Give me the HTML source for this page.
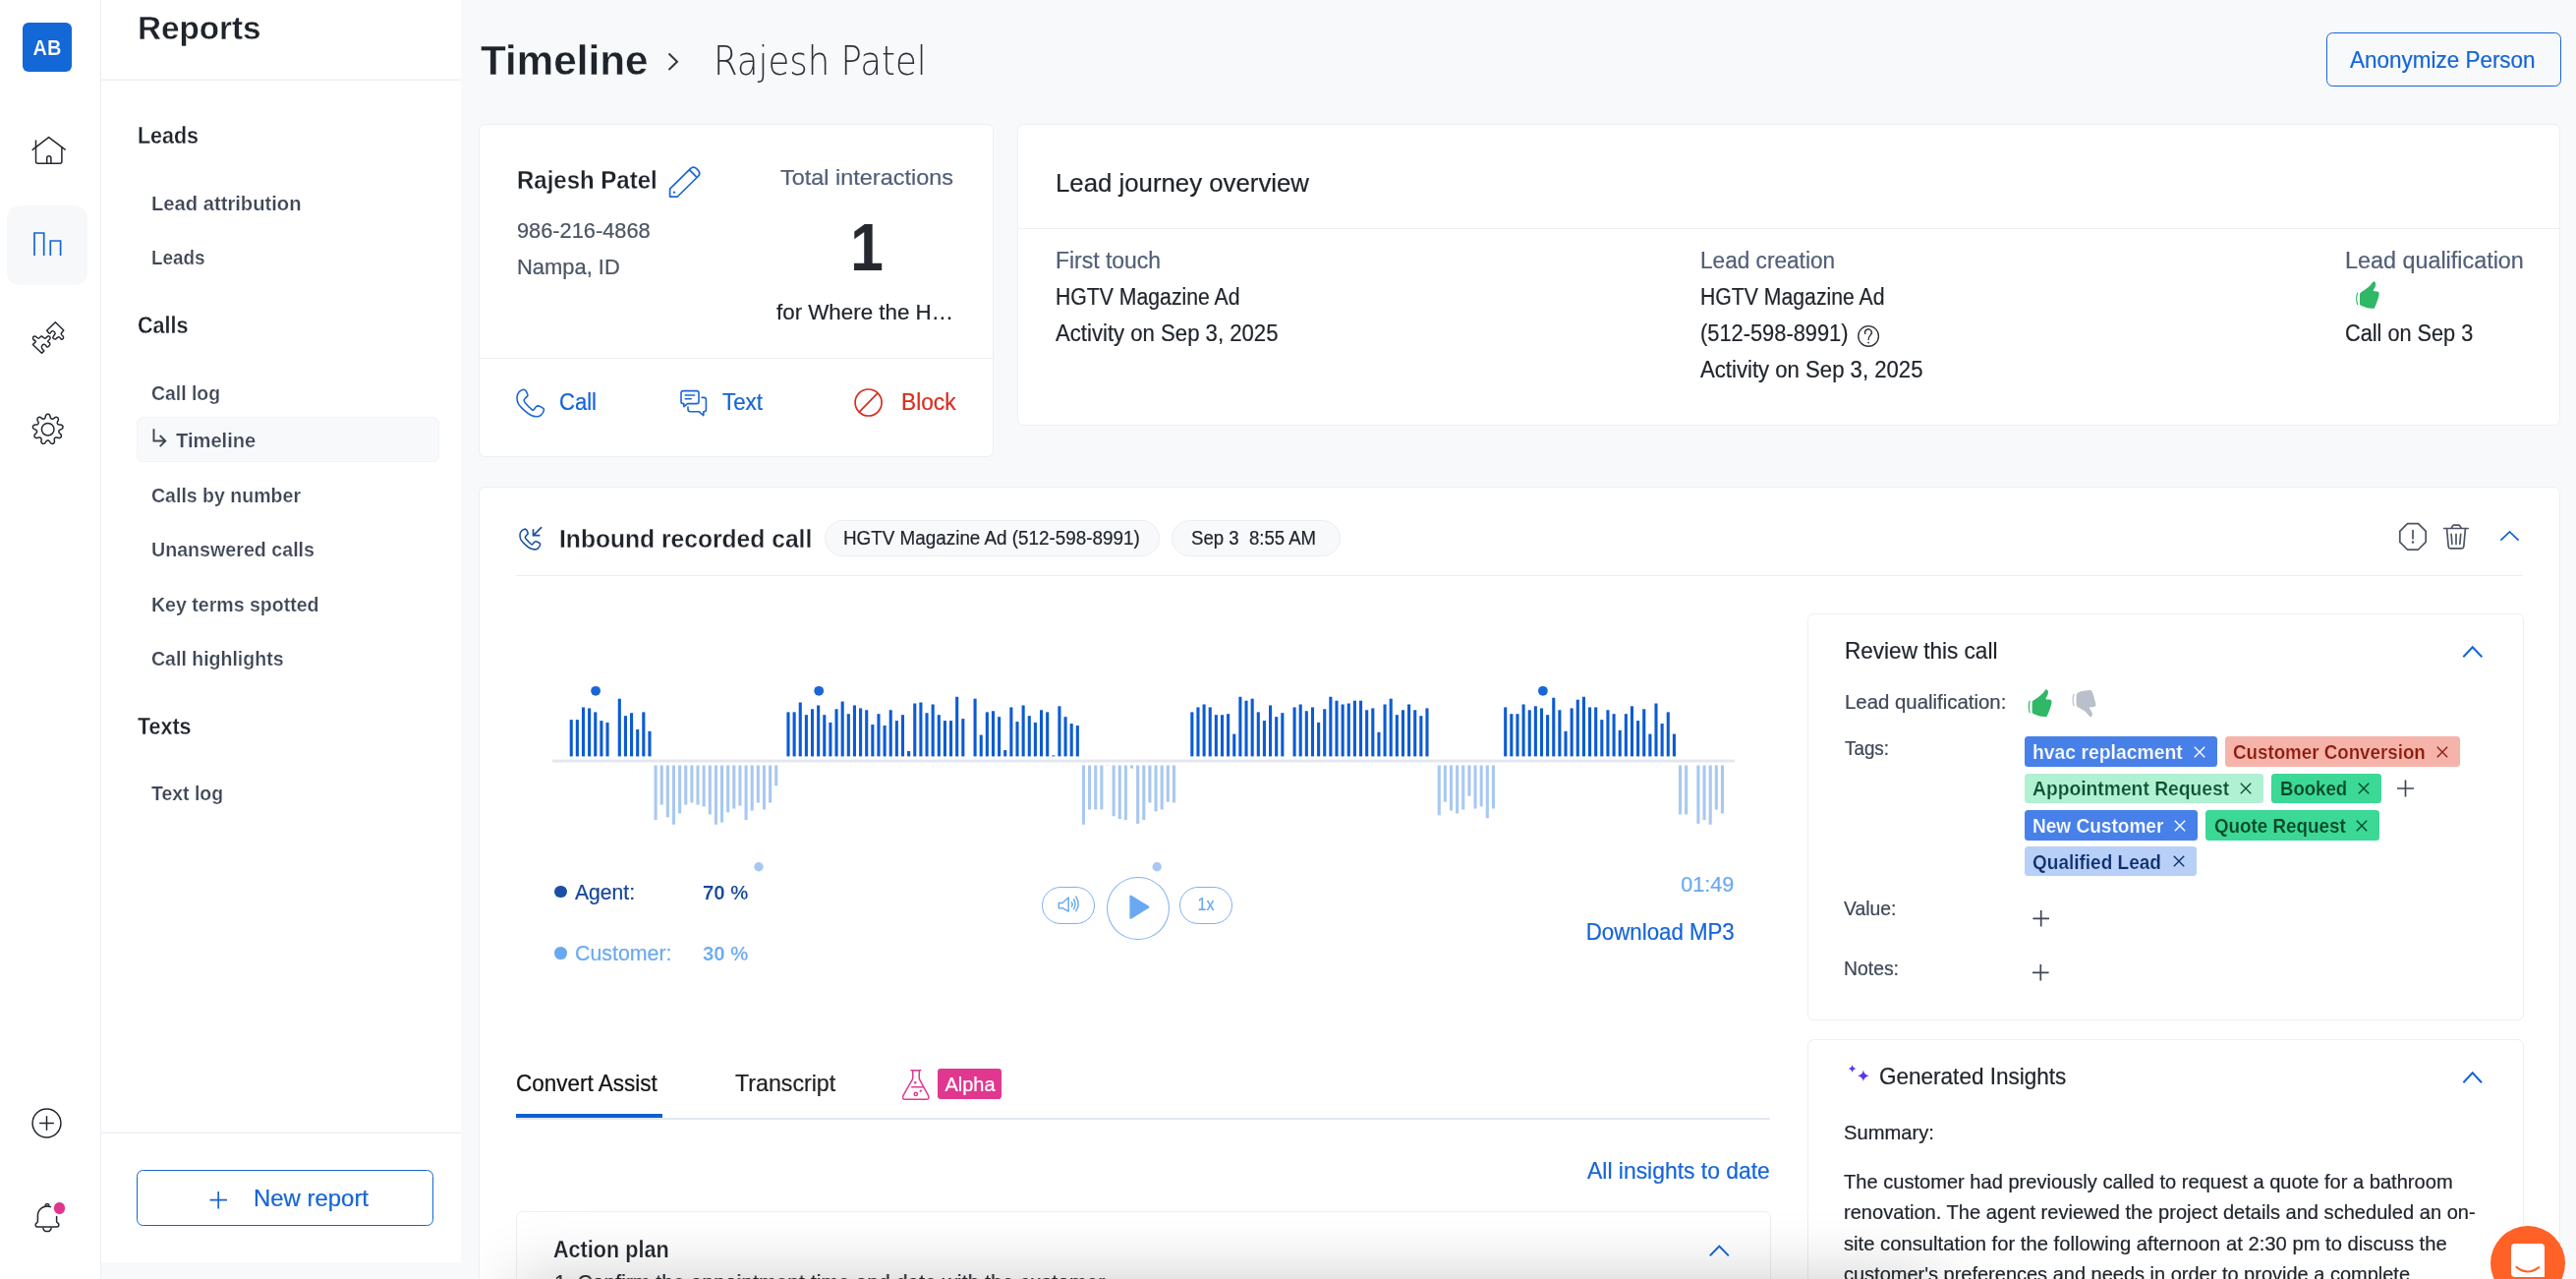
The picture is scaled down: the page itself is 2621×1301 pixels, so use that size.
<!DOCTYPE html>
<html lang="en"><head><meta charset="utf-8"><title>Timeline - Rajesh Patel</title>
<style>
html,body{margin:0;padding:0}
body{width:2621px;height:1301px;overflow:hidden;background:#f7f9fb;font-family:"Liberation Sans",sans-serif;position:relative}
.t{position:absolute;white-space:pre;line-height:1}
.b,.a,.tag{position:absolute;box-sizing:border-box}
.a{overflow:visible}
.card{background:#fff;border:1px solid #eceff3;border-radius:6.4px}
.tag{border-radius:3.5px}
.sb{-webkit-text-stroke:0.45px currentColor}
</style></head><body>
<!-- rail -->
<div class="b" style="left:0;top:0;width:103px;height:1301px;background:#fff;border-right:1px solid #eceef3"></div>
<div class="b" style="left:22.8px;top:22.5px;width:50.4px;height:50.4px;border-radius:6px;background:#1467d7"></div>
<div class="b" style="left:7.4px;top:208.5px;width:81.4px;height:81.8px;border-radius:13px;background:#f6f8fa"></div>
<svg class="a" style="left:0;top:0" width="102" height="1301" viewBox="0 0 102 1301" fill="none" stroke="#23272e" stroke-width="1.5" stroke-linecap="round" stroke-linejoin="round">
<path d="M33.1 152.4L49.6 139.6L66.2 152.1"/><path d="M36.5 143V164.2Q36.5 166.2 38.5 166.2H60.9Q62.9 166.2 62.9 164.2V150"/><path d="M47.7 166.2V160.8A2.1 2.1 0 0 1 51.9 160.8V166.2"/>
<path d="M35 260V237H44.7V260M51.3 260V245H61.6V260" stroke="#1565d8" stroke-width="1.7" stroke-linecap="butt" stroke-linejoin="miter"/>
<g transform="translate(20 315) scale(0.0469)" stroke-width="31"><path d="M285.0 755.0L480.0 945.0L530.0 895.0C513.3 873.3 486.7 850.0 480.0 830.0C473.3 810.0 479.2 787.5 490.0 775.0C500.8 762.5 526.7 749.2 545.0 755.0C563.3 760.8 582.5 807.5 600.0 810.0C617.5 812.5 640.8 783.3 650.0 770.0C659.2 756.7 661.7 743.3 655.0 730.0C648.3 716.7 610.0 705.0 610.0 690.0C610.0 675.0 646.7 655.0 655.0 640.0C663.3 625.0 665.8 611.7 660.0 600.0C654.2 588.3 639.2 565.8 620.0 570.0C600.8 574.2 569.2 624.2 545.0 625.0C520.8 625.8 497.5 575.0 475.0 575.0C452.5 575.0 433.3 625.0 410.0 625.0C386.7 625.0 355.0 579.2 335.0 575.0C315.0 570.8 295.8 587.5 290.0 600.0C284.2 612.5 290.0 635.0 300.0 650.0C310.0 665.0 352.5 672.5 350.0 690.0C347.5 707.5 306.7 733.3 285.0 755.0Z"/><path d="M775.0 270.0L955.0 450.0C936.7 475.0 900.8 501.7 900.0 525.0C899.2 548.3 943.3 572.5 950.0 590.0C956.7 607.5 947.5 620.8 940.0 630.0C932.5 639.2 920.0 651.7 905.0 645.0C890.0 638.3 872.5 590.8 850.0 590.0C827.5 589.2 791.7 638.3 770.0 640.0C748.3 641.7 720.0 620.0 720.0 600.0C720.0 580.0 766.7 541.7 770.0 520.0C773.3 498.3 751.7 479.2 740.0 470.0C728.3 460.8 715.0 457.5 700.0 465.0C685.0 472.5 668.3 516.7 650.0 515.0C631.7 513.3 610.0 475.0 590.0 455.0L775.0 270.0Z"/></g>
<path d="M48.70 421.20L49.24 421.27L49.76 421.49L50.26 421.86L50.71 422.40L51.03 423.50L51.27 424.61L51.57 425.18L51.88 425.60L52.21 425.89L52.56 426.08L52.96 426.17L53.40 426.15L53.90 426.03L54.50 425.79L55.40 425.10L56.35 424.46L57.05 424.33L57.66 424.36L58.20 424.53L58.66 424.83L59.03 425.23L59.29 425.73L59.44 426.33L59.43 427.04L58.96 428.09L58.44 429.09L58.31 429.72L58.28 430.24L58.34 430.68L58.49 431.05L58.73 431.37L59.08 431.64L59.55 431.87L60.16 432.07L61.29 432.12L62.43 432.24L63.05 432.59L63.50 433.01L63.80 433.49L63.96 434.01L63.99 434.55L63.87 435.11L63.59 435.66L63.13 436.20L62.10 436.70L61.05 437.13L60.54 437.53L60.19 437.91L59.95 438.28L59.83 438.66L59.81 439.06L59.91 439.49L60.11 439.97L60.46 440.52L61.29 441.28L62.09 442.11L62.34 442.77L62.41 443.38L62.33 443.95L62.12 444.45L61.79 444.88L61.34 445.23L60.78 445.47L60.08 445.59L58.96 445.31L57.89 444.97L57.24 444.95L56.72 445.01L56.30 445.14L55.96 445.36L55.70 445.65L55.49 446.04L55.34 446.54L55.25 447.18L55.40 448.30L55.48 449.45L55.24 450.12L54.90 450.63L54.48 451.01L54.00 451.27L53.47 451.38L52.90 451.36L52.31 451.18L51.70 450.82L51.03 449.90L50.42 448.94L49.94 448.51L49.51 448.22L49.10 448.06L48.70 448.00L48.30 448.06L47.89 448.22L47.46 448.51L46.98 448.94L46.37 449.90L45.70 450.82L45.09 451.18L44.50 451.36L43.93 451.38L43.40 451.27L42.92 451.01L42.50 450.63L42.16 450.12L41.92 449.45L42.00 448.30L42.15 447.18L42.06 446.54L41.91 446.04L41.70 445.65L41.44 445.36L41.10 445.14L40.68 445.01L40.16 444.95L39.51 444.97L38.44 445.31L37.32 445.59L36.62 445.47L36.06 445.23L35.61 444.88L35.28 444.45L35.07 443.95L34.99 443.38L35.06 442.77L35.31 442.11L36.11 441.28L36.94 440.52L37.29 439.97L37.49 439.49L37.59 439.06L37.57 438.66L37.45 438.28L37.21 437.91L36.86 437.53L36.35 437.13L35.30 436.70L34.27 436.20L33.81 435.66L33.53 435.11L33.41 434.55L33.44 434.01L33.60 433.49L33.90 433.01L34.35 432.59L34.97 432.24L36.11 432.12L37.24 432.07L37.85 431.87L38.32 431.64L38.67 431.37L38.91 431.05L39.06 430.68L39.12 430.24L39.09 429.72L38.96 429.09L38.44 428.09L37.97 427.04L37.96 426.33L38.11 425.73L38.37 425.23L38.74 424.83L39.20 424.53L39.74 424.36L40.35 424.33L41.05 424.46L42.00 425.10L42.90 425.79L43.50 426.03L44.00 426.15L44.44 426.17L44.84 426.08L45.19 425.89L45.52 425.60L45.83 425.18L46.13 424.61L46.37 423.50L46.69 422.40L47.14 421.86L47.64 421.49L48.16 421.27Z"/><circle cx="48.7" cy="436.7" r="6.3"/>
<circle cx="47.5" cy="1142.5" r="14.4"/><path d="M40.7 1142.5H54.3M47.5 1135.7V1149.3"/>
<path d="M51.5 1227.6A9.6 9.6 0 0 0 38.4 1236.5V1242.2Q38.4 1243.6 37 1244.2Q36.2 1244.8 36.2 1245.9Q36.2 1247.9 38.2 1247.9H57.8Q59.8 1247.9 59.8 1245.9Q59.8 1244.8 59 1244.2Q57.6 1243.6 57.6 1242.2V1237.5"/><path d="M46.2 1225.8A1.9 1.9 0 0 1 49.8 1225.8"/><path d="M43.9 1249.3A4.2 4.2 0 0 0 52.1 1249.3"/>
</svg>
<div class="b" style="left:53.6px;top:1222.1px;width:13.6px;height:13.6px;border-radius:50%;background:#e0358c;border:1.6px solid #fff"></div>

<!-- sidebar -->
<div class="b" style="left:103px;top:0;width:366px;height:1284px;background:#fff"></div>
<div class="b" style="left:103px;top:80px;width:366px;height:2px;background:linear-gradient(#f7f8fa 50%,#eceef3 50%)"></div>
<div class="b" style="left:103px;top:1151px;width:366px;height:2px;background:linear-gradient(#f7f8fa 50%,#eceef3 50%)"></div>
<div class="b" style="left:139.1px;top:424.3px;width:308.1px;height:45.4px;border-radius:6.4px;background:#f8f9fb;border:1.6px solid #f1f3f6"></div>
<svg class="a" style="left:150px;top:430px" width="24" height="30" viewBox="150 430 24 30" fill="none" stroke="#3f4756" stroke-width="1.9"><path d="M156.5 436.2V448.5H167.6M162.7 443L168.3 448.5L162.7 454.1"/></svg>
<div class="b" style="left:139.2px;top:1190.4px;width:302.2px;height:56.6px;border-radius:6.4px;border:1.6px solid #1565d8;background:#fff"></div>
<svg class="a" style="left:212px;top:1210px" width="22" height="22" viewBox="212 1210 22 22" fill="none" stroke="#1565d8" stroke-width="1.7"><path d="M213.5 1220.7H231M222.2 1212V1229.4"/></svg>

<!-- header -->
<svg class="a" style="left:676px;top:50px" width="18" height="26" viewBox="676 50 18 26" fill="none" stroke="#33383f" stroke-width="2"><path d="M680.5 54.5L689 62.7L680.5 71"/></svg>
<div class="b" style="left:2366.5px;top:33.2px;width:239.3px;height:54.4px;border-radius:6.4px;border:1.6px solid #1565d8;background:#f7f9fb"></div>

<!-- contact card -->
<div class="b card" style="left:487px;top:126px;width:524px;height:339px"></div>
<div class="b" style="left:488px;top:364px;width:522px;height:1px;background:#eceff3"></div>
<svg class="a" style="left:678px;top:166px" width="38" height="38" viewBox="678 166 38 38" fill="none" stroke="#1a66d8" stroke-width="1.75" stroke-linejoin="round"><path d="M681.6 200V192.2L702.4 171.7Q705.6 168.6 708.8 171.7L710.2 173.1Q713.3 176.3 710.2 179.5L689.3 200Z"/><path d="M701.6 172.8L709 180.4"/><circle cx="686" cy="195.6" r="1.2" fill="#1a66d8" stroke="none"/></svg>
<g></g>
<svg class="a" style="left:526.4px;top:395.8px" width="27.8" height="28" viewBox="315 420 485 490" fill="none" stroke="#1a66d8" stroke-width="28" stroke-linejoin="round"><path d="M425.0 425.0C406.7 430.8 368.3 447.5 350.0 470.0C331.7 492.5 316.7 525.0 315.0 560.0C313.3 595.0 317.5 640.0 340.0 680.0C362.5 720.0 413.3 766.7 450.0 800.0C486.7 833.3 525.0 862.5 560.0 880.0C595.0 897.5 630.0 905.0 660.0 905.0C690.0 905.0 717.5 899.2 740.0 880.0C762.5 860.8 790.0 811.7 795.0 790.0C800.0 768.3 787.5 762.5 770.0 750.0C752.5 737.5 710.0 717.5 690.0 715.0C670.0 712.5 663.3 723.3 650.0 735.0C636.7 746.7 621.7 777.5 610.0 785.0C598.3 792.5 605.0 800.8 580.0 780.0C555.0 759.2 483.3 688.3 460.0 660.0C436.7 631.7 438.3 625.0 440.0 610.0C441.7 595.0 459.2 583.3 470.0 570.0C480.8 556.7 501.7 545.0 505.0 530.0C508.3 515.0 497.5 495.8 490.0 480.0C482.5 464.2 470.8 444.2 460.0 435.0C449.2 425.8 443.3 419.2 425.0 425.0Z"/></svg>
<svg class="a" style="left:690px;top:394px" width="32" height="32" viewBox="690 394 32 32" fill="none" stroke="#1a66d8" stroke-width="1.6" stroke-linejoin="round" stroke-linecap="round"><path d="M695.2 397.6H708.8Q711 397.6 711 399.8V408.4Q711 410.6 708.8 410.6H699.5L695.8 413.6V410.6H695.2Q693 410.6 693 408.4V399.8Q693 397.6 695.2 397.6Z"/><path d="M697.2 402H706.6M697.2 405.8H703.2"/><path d="M714.2 404.4H716.2Q718.4 404.4 718.4 406.6V416.6Q718.4 418.8 716.2 418.8H715.8V422.6L711.4 418.8H702.2Q700 418.8 700 416.6V414"/></svg>
<svg class="a" style="left:868px;top:394px" width="32" height="32" viewBox="868 394 32 32" fill="none" stroke="#d92d20" stroke-width="1.7"><circle cx="883.6" cy="409.5" r="13.5"/><path d="M874.2 419.2L893 399.8"/></svg>

<!-- journey card -->
<div class="b card" style="left:1035px;top:126px;width:1570px;height:307px"></div>
<div class="b" style="left:1036px;top:232px;width:1568px;height:1px;background:#eceff3"></div>
<svg class="a" style="left:1888px;top:329px" width="26" height="26" viewBox="1888 329 26 26" fill="none" stroke="#2b2f36" stroke-width="1.35" stroke-linecap="round"><circle cx="1901.1" cy="341.9" r="10.3"/><path d="M1897.8 339.6A3.4 3.4 0 1 1 1903.4 340.6Q1901.1 342.6 1901.1 345.6"/><circle cx="1901.1" cy="348.6" r="0.9" fill="#2b2f36" stroke="none"/></svg>
<svg class="a" style="left:2395.8px;top:286.4px" width="25.6" height="28" viewBox="325 290 640 725"><path d="M460.0 600.0C485.8 575.0 560.0 530.0 600.0 500.0C640.0 470.0 669.2 450.8 700.0 420.0C730.8 389.2 765.8 335.8 785.0 315.0C804.2 294.2 802.8 290.8 815.0 295.0C827.2 299.2 852.2 315.8 858.0 340.0C863.8 364.2 859.7 405.8 850.0 440.0C840.3 474.2 791.7 525.0 800.0 545.0C808.3 565.0 875.0 550.8 900.0 560.0C925.0 569.2 943.3 576.7 950.0 600.0C956.7 623.3 951.7 653.3 940.0 700.0C928.3 746.7 899.2 830.0 880.0 880.0C860.8 930.0 840.0 978.3 825.0 1000.0C810.0 1021.7 827.5 1013.3 790.0 1010.0C752.5 1006.7 655.0 995.0 600.0 980.0C545.0 965.0 485.8 941.7 460.0 920.0C434.2 898.3 447.5 895.0 445.0 850.0C442.5 805.0 442.5 691.7 445.0 650.0C447.5 608.3 434.2 625.0 460.0 600.0Z" fill="#2fb866"/><path d="M385 590Q330 750 385 910" fill="none" stroke="#2fb866" stroke-width="30"/></svg>

<!-- call card -->
<div class="b card" style="left:487px;top:495px;width:2118px;height:900px"></div>
<div class="b" style="left:525px;top:585px;width:2042px;height:1px;background:#eceff3"></div>
<svg class="a" style="left:528.5px;top:538px" width="20.9" height="21.1" viewBox="315 420 485 490" fill="none" stroke="#1a4fa3" stroke-width="36" stroke-linejoin="round"><path d="M425.0 425.0C406.7 430.8 368.3 447.5 350.0 470.0C331.7 492.5 316.7 525.0 315.0 560.0C313.3 595.0 317.5 640.0 340.0 680.0C362.5 720.0 413.3 766.7 450.0 800.0C486.7 833.3 525.0 862.5 560.0 880.0C595.0 897.5 630.0 905.0 660.0 905.0C690.0 905.0 717.5 899.2 740.0 880.0C762.5 860.8 790.0 811.7 795.0 790.0C800.0 768.3 787.5 762.5 770.0 750.0C752.5 737.5 710.0 717.5 690.0 715.0C670.0 712.5 663.3 723.3 650.0 735.0C636.7 746.7 621.7 777.5 610.0 785.0C598.3 792.5 605.0 800.8 580.0 780.0C555.0 759.2 483.3 688.3 460.0 660.0C436.7 631.7 438.3 625.0 440.0 610.0C441.7 595.0 459.2 583.3 470.0 570.0C480.8 556.7 501.7 545.0 505.0 530.0C508.3 515.0 497.5 495.8 490.0 480.0C482.5 464.2 470.8 444.2 460.0 435.0C449.2 425.8 443.3 419.2 425.0 425.0Z"/></svg>
<svg class="a" style="left:540px;top:534px" width="14" height="14" viewBox="540 534 14 14" fill="none" stroke="#1a4fa3" stroke-width="1.7" stroke-linecap="round"><path d="M550.7 536.6L542.6 544.6M542.5 538.8V544.7H548.7"/></svg>
<div class="b" style="left:838.9px;top:528.9px;width:340.9px;height:37.1px;border-radius:19px;background:#f8f9fb;border:1.5px solid #eceef2"></div>
<div class="b" style="left:1192.3px;top:528.9px;width:172px;height:37.1px;border-radius:19px;background:#f8f9fb;border:1.5px solid #eceef2"></div>
<svg class="a" style="left:2436px;top:528px" width="132" height="36" viewBox="2436 528 132 36" fill="none" stroke="#4d5463" stroke-width="1.75" stroke-linecap="round" stroke-linejoin="round"><path d="M2449.5 532.6H2460.5L2468.2 540.3V551.3L2460.5 559H2449.5L2441.8 551.3V540.3Z"/><path d="M2455 539.6V547.8"/><circle cx="2455" cy="551.5" r="1.2" fill="#4a5160" stroke="none"/>
<path d="M2486.6 537.5H2511.2M2494.1 537.2L2495.8 534.6Q2496.2 534.1 2496.8 534.1H2501.6Q2502.2 534.1 2502.6 534.6L2504.3 537.2M2489.6 538L2491.2 556Q2491.4 557.8 2493.2 557.8H2504.8Q2506.6 557.8 2506.8 556L2508.4 538M2494.1 543.3L2494.9 553.4M2499 543.3V553.4M2503.7 543.3L2502.8 553.4" stroke-width="1.7"/>
<path d="M2544.4 549.6L2553.5 540.9L2562.6 549.6" stroke="#1565d8" stroke-width="1.8" stroke-linecap="butt" stroke-linejoin="miter"/></svg>

<!-- waveform -->
<svg class="a" style="left:550px;top:680px" width="1230" height="220" viewBox="0 0 1230 220">
<rect x="12" y="92.6" width="1203" height="2.9" fill="#e3e6f0"/>
<g fill="#0d5bd3"><rect x="29.69" y="52.11" width="3.1" height="37.29"/><rect x="35.82" y="52.11" width="3.1" height="37.29"/><rect x="41.95" y="39.45" width="3.1" height="49.95"/><rect x="48.09" y="40.43" width="3.1" height="48.97"/><rect x="54.22" y="44.37" width="3.1" height="45.03"/><rect x="60.35" y="53.10" width="3.1" height="36.30"/><rect x="66.48" y="54.93" width="3.1" height="34.47"/><rect x="78.75" y="30.73" width="3.1" height="58.67"/><rect x="84.88" y="48.17" width="3.1" height="41.23"/><rect x="91.01" y="45.22" width="3.1" height="44.18"/><rect x="97.14" y="61.96" width="3.1" height="27.44"/><rect x="103.27" y="44.37" width="3.1" height="45.03"/><rect x="109.41" y="63.79" width="3.1" height="25.61"/><rect x="250.44" y="44.37" width="3.1" height="45.03"/><rect x="256.57" y="44.37" width="3.1" height="45.03"/><rect x="262.71" y="34.52" width="3.1" height="54.88"/><rect x="268.84" y="47.19" width="3.1" height="42.21"/><rect x="274.97" y="41.28" width="3.1" height="48.12"/><rect x="281.10" y="37.48" width="3.1" height="51.92"/><rect x="287.23" y="47.19" width="3.1" height="42.21"/><rect x="293.37" y="54.93" width="3.1" height="34.47"/><rect x="299.50" y="41.28" width="3.1" height="48.12"/><rect x="305.63" y="33.54" width="3.1" height="55.86"/><rect x="311.76" y="46.20" width="3.1" height="43.20"/><rect x="317.89" y="37.48" width="3.1" height="51.92"/><rect x="324.03" y="40.43" width="3.1" height="48.97"/><rect x="330.16" y="42.26" width="3.1" height="47.14"/><rect x="336.29" y="57.04" width="3.1" height="32.36"/><rect x="342.42" y="46.20" width="3.1" height="43.20"/><rect x="348.55" y="58.02" width="3.1" height="31.38"/><rect x="354.69" y="42.26" width="3.1" height="47.14"/><rect x="360.82" y="53.10" width="3.1" height="36.30"/><rect x="366.95" y="47.19" width="3.1" height="42.21"/><rect x="373.08" y="84.05" width="3.1" height="5.35"/><rect x="379.21" y="35.51" width="3.1" height="53.89"/><rect x="385.35" y="34.52" width="3.1" height="54.88"/><rect x="391.48" y="45.22" width="3.1" height="44.18"/><rect x="397.61" y="36.49" width="3.1" height="52.91"/><rect x="403.74" y="47.19" width="3.1" height="42.21"/><rect x="409.87" y="53.10" width="3.1" height="36.30"/><rect x="416.01" y="53.10" width="3.1" height="36.30"/><rect x="422.14" y="28.76" width="3.1" height="60.64"/><rect x="428.27" y="51.13" width="3.1" height="38.27"/><rect x="440.53" y="30.73" width="3.1" height="58.67"/><rect x="446.67" y="67.59" width="3.1" height="21.81"/><rect x="452.80" y="44.37" width="3.1" height="45.03"/><rect x="458.93" y="43.25" width="3.1" height="46.15"/><rect x="465.06" y="49.16" width="3.1" height="40.24"/><rect x="471.19" y="83.07" width="3.1" height="6.33"/><rect x="477.33" y="39.45" width="3.1" height="49.95"/><rect x="483.46" y="54.08" width="3.1" height="35.32"/><rect x="489.59" y="37.48" width="3.1" height="51.92"/><rect x="495.72" y="48.17" width="3.1" height="41.23"/><rect x="501.85" y="54.93" width="3.1" height="34.47"/><rect x="507.99" y="42.26" width="3.1" height="47.14"/><rect x="514.12" y="44.37" width="3.1" height="45.03"/><rect x="520.25" y="88.42" width="3.1" height="0.98"/><rect x="526.38" y="38.32" width="3.1" height="51.08"/><rect x="532.51" y="49.16" width="3.1" height="40.24"/><rect x="538.65" y="56.05" width="3.1" height="33.35"/><rect x="544.78" y="58.02" width="3.1" height="31.38"/><rect x="661.29" y="44.37" width="3.1" height="45.03"/><rect x="667.42" y="39.45" width="3.1" height="49.95"/><rect x="673.55" y="36.49" width="3.1" height="52.91"/><rect x="679.68" y="39.45" width="3.1" height="49.95"/><rect x="685.81" y="47.19" width="3.1" height="42.21"/><rect x="691.95" y="47.19" width="3.1" height="42.21"/><rect x="698.08" y="46.20" width="3.1" height="43.20"/><rect x="704.21" y="66.61" width="3.1" height="22.79"/><rect x="710.34" y="28.76" width="3.1" height="60.64"/><rect x="716.47" y="32.70" width="3.1" height="56.70"/><rect x="722.61" y="30.73" width="3.1" height="58.67"/><rect x="728.74" y="44.37" width="3.1" height="45.03"/><rect x="734.87" y="53.10" width="3.1" height="36.30"/><rect x="741.00" y="37.48" width="3.1" height="51.92"/><rect x="747.13" y="49.16" width="3.1" height="40.24"/><rect x="753.27" y="45.22" width="3.1" height="44.18"/><rect x="765.53" y="39.45" width="3.1" height="49.95"/><rect x="771.66" y="36.49" width="3.1" height="52.91"/><rect x="777.79" y="43.25" width="3.1" height="46.15"/><rect x="783.93" y="39.45" width="3.1" height="49.95"/><rect x="790.06" y="54.93" width="3.1" height="34.47"/><rect x="796.19" y="41.28" width="3.1" height="48.12"/><rect x="802.32" y="28.76" width="3.1" height="60.64"/><rect x="808.45" y="32.70" width="3.1" height="56.70"/><rect x="814.59" y="36.49" width="3.1" height="52.91"/><rect x="820.72" y="35.51" width="3.1" height="53.89"/><rect x="826.85" y="32.70" width="3.1" height="56.70"/><rect x="832.98" y="32.70" width="3.1" height="56.70"/><rect x="839.11" y="42.26" width="3.1" height="47.14"/><rect x="845.25" y="40.43" width="3.1" height="48.97"/><rect x="851.38" y="64.78" width="3.1" height="24.62"/><rect x="857.51" y="36.49" width="3.1" height="52.91"/><rect x="863.64" y="30.73" width="3.1" height="58.67"/><rect x="869.77" y="47.19" width="3.1" height="42.21"/><rect x="875.91" y="42.26" width="3.1" height="47.14"/><rect x="882.04" y="36.49" width="3.1" height="52.91"/><rect x="888.17" y="42.26" width="3.1" height="47.14"/><rect x="894.30" y="48.17" width="3.1" height="41.23"/><rect x="900.43" y="40.43" width="3.1" height="48.97"/><rect x="980.15" y="39.45" width="3.1" height="49.95"/><rect x="986.28" y="46.20" width="3.1" height="43.20"/><rect x="992.41" y="46.20" width="3.1" height="43.20"/><rect x="998.55" y="36.49" width="3.1" height="52.91"/><rect x="1004.68" y="42.26" width="3.1" height="47.14"/><rect x="1010.81" y="38.32" width="3.1" height="51.08"/><rect x="1016.94" y="40.43" width="3.1" height="48.97"/><rect x="1023.07" y="47.19" width="3.1" height="42.21"/><rect x="1029.21" y="29.74" width="3.1" height="59.66"/><rect x="1035.34" y="42.26" width="3.1" height="47.14"/><rect x="1041.47" y="63.79" width="3.1" height="25.61"/><rect x="1047.60" y="40.43" width="3.1" height="48.97"/><rect x="1053.73" y="31.71" width="3.1" height="57.69"/><rect x="1059.87" y="28.76" width="3.1" height="60.64"/><rect x="1066.00" y="39.45" width="3.1" height="49.95"/><rect x="1072.13" y="39.45" width="3.1" height="49.95"/><rect x="1078.26" y="52.11" width="3.1" height="37.29"/><rect x="1084.39" y="42.26" width="3.1" height="47.14"/><rect x="1090.53" y="46.20" width="3.1" height="43.20"/><rect x="1096.66" y="62.81" width="3.1" height="26.59"/><rect x="1102.79" y="46.20" width="3.1" height="43.20"/><rect x="1108.92" y="38.32" width="3.1" height="51.08"/><rect x="1115.05" y="53.10" width="3.1" height="36.30"/><rect x="1121.19" y="41.28" width="3.1" height="48.12"/><rect x="1127.32" y="66.61" width="3.1" height="22.79"/><rect x="1133.45" y="35.51" width="3.1" height="53.89"/><rect x="1139.58" y="56.05" width="3.1" height="33.35"/><rect x="1145.71" y="44.37" width="3.1" height="45.03"/><rect x="1151.85" y="66.61" width="3.1" height="22.79"/></g>
<g fill="#a9c8f1"><rect x="115.54" y="98.50" width="3.1" height="55.58"/><rect x="121.67" y="98.50" width="3.1" height="40.10"/><rect x="127.80" y="98.50" width="3.1" height="52.76"/><rect x="133.93" y="98.50" width="3.1" height="60.22"/><rect x="140.07" y="98.50" width="3.1" height="48.97"/><rect x="146.20" y="98.50" width="3.1" height="40.10"/><rect x="152.33" y="98.50" width="3.1" height="37.99"/><rect x="158.46" y="98.50" width="3.1" height="40.10"/><rect x="164.59" y="98.50" width="3.1" height="41.93"/><rect x="170.73" y="98.50" width="3.1" height="49.95"/><rect x="176.86" y="98.50" width="3.1" height="60.22"/><rect x="182.99" y="98.50" width="3.1" height="58.11"/><rect x="189.12" y="98.50" width="3.1" height="47.84"/><rect x="195.25" y="98.50" width="3.1" height="44.04"/><rect x="201.39" y="98.50" width="3.1" height="41.09"/><rect x="207.52" y="98.50" width="3.1" height="55.58"/><rect x="213.65" y="98.50" width="3.1" height="46.01"/><rect x="219.78" y="98.50" width="3.1" height="37.99"/><rect x="225.91" y="98.50" width="3.1" height="45.03"/><rect x="232.05" y="98.50" width="3.1" height="37.99"/><rect x="238.18" y="98.50" width="3.1" height="20.82"/><rect x="550.91" y="98.50" width="3.1" height="60.22"/><rect x="557.04" y="98.50" width="3.1" height="45.03"/><rect x="563.17" y="98.50" width="3.1" height="45.03"/><rect x="569.31" y="98.50" width="3.1" height="45.03"/><rect x="575.44" y="98.50" width="3.1" height="0.42"/><rect x="581.57" y="98.50" width="3.1" height="51.78"/><rect x="587.70" y="98.50" width="3.1" height="54.59"/><rect x="593.83" y="98.50" width="3.1" height="55.58"/><rect x="599.97" y="98.50" width="3.1" height="3.10"/><rect x="606.10" y="98.50" width="3.1" height="59.38"/><rect x="612.23" y="98.50" width="3.1" height="55.58"/><rect x="618.36" y="98.50" width="3.1" height="37.99"/><rect x="624.49" y="98.50" width="3.1" height="46.86"/><rect x="630.63" y="98.50" width="3.1" height="45.03"/><rect x="636.76" y="98.50" width="3.1" height="37.15"/><rect x="642.89" y="98.50" width="3.1" height="37.99"/><rect x="912.70" y="98.50" width="3.1" height="50.79"/><rect x="918.83" y="98.50" width="3.1" height="37.15"/><rect x="924.96" y="98.50" width="3.1" height="46.01"/><rect x="931.09" y="98.50" width="3.1" height="48.97"/><rect x="937.23" y="98.50" width="3.1" height="45.03"/><rect x="943.36" y="98.50" width="3.1" height="31.24"/><rect x="949.49" y="98.50" width="3.1" height="44.04"/><rect x="955.62" y="98.50" width="3.1" height="41.93"/><rect x="961.75" y="98.50" width="3.1" height="53.75"/><rect x="967.89" y="98.50" width="3.1" height="44.04"/><rect x="1157.98" y="98.50" width="3.1" height="49.95"/><rect x="1164.11" y="98.50" width="3.1" height="49.95"/><rect x="1176.37" y="98.50" width="3.1" height="59.38"/><rect x="1182.51" y="98.50" width="3.1" height="55.58"/><rect x="1188.64" y="98.50" width="3.1" height="60.22"/><rect x="1194.77" y="98.50" width="3.1" height="45.03"/><rect x="1200.90" y="98.50" width="3.1" height="48.97"/></g>
<g fill="#1a66d8"><circle cx="56.1" cy="22.8" r="4.9"/><circle cx="283.2" cy="22.8" r="4.9"/><circle cx="1019.9" cy="22.8" r="4.9"/></g>
<g fill="#a9c8f1"><circle cx="222" cy="201.7" r="4.7"/><circle cx="627.2" cy="201.7" r="4.7"/></g>
</svg>
<div class="b" style="left:564.4px;top:900.6px;width:12.6px;height:12.6px;border-radius:50%;background:#1a4fa3"></div>
<div class="b" style="left:564.4px;top:963px;width:12.6px;height:12.6px;border-radius:50%;background:#6aa9f2"></div>

<!-- controls -->
<div class="b" style="left:1059.8px;top:902.3px;width:54.1px;height:37.3px;border-radius:19px;border:1.4px solid #7fb2f3"></div>
<div class="b" style="left:1125.7px;top:891.7px;width:64px;height:64.6px;border-radius:50%;border:1.4px solid #7fb2f3"></div>
<div class="b" style="left:1200.3px;top:902.3px;width:54.1px;height:37.3px;border-radius:19px;border:1.4px solid #7fb2f3"></div>
<svg class="a" style="left:1072px;top:908px" width="30" height="26" viewBox="1072 908 30 26" fill="none" stroke="#6aa9f2" stroke-width="1.5" stroke-linejoin="round" stroke-linecap="round"><path d="M1077.3 918.5H1081L1087.2 913V927.1L1081 923.7H1077.3Z"/><path d="M1090.4 917.9Q1092 920 1090.4 922.1M1092.6 915Q1095.6 920 1092.6 924.6M1094.8 912.2Q1099.5 920 1094.8 926.6"/></svg>
<svg class="a" style="left:1146px;top:908px" width="28" height="30" viewBox="1146 908 28 30"><path d="M1150.4 911.6L1168.5 922.7L1150.4 933.8Z" fill="#6aa9f2" stroke="#6aa9f2" stroke-width="2" stroke-linejoin="round"/></svg>

<!-- tabs -->
<div class="b" style="left:525.2px;top:1137.4px;width:1276px;height:1.6px;background:#e1e7ef"></div>
<div class="b" style="left:525.3px;top:1132.8px;width:149px;height:3.9px;background:#0f5fd4"></div>
<svg class="a" style="left:916px;top:1086px" width="32" height="36" viewBox="916 1086 32 36" fill="none" stroke="#e0388f" stroke-width="1.5" stroke-linejoin="round" stroke-linecap="round"><path d="M926.9 1088.8H936.8M928.7 1088.8V1097.4L919 1114.4Q917.4 1118.3 921.3 1118.3H942.2Q946.1 1118.3 944.5 1114.4L935.3 1097.4V1088.8"/><path d="M927.7 1105.8H939.1"/><circle cx="931.3" cy="1101.3" r="1.2" fill="#e0388f" stroke="none"/><circle cx="936.8" cy="1109.6" r="1.2" fill="#e0388f" stroke="none"/><circle cx="931.8" cy="1112.9" r="1.6"/></svg>
<div class="b" style="left:953.9px;top:1087px;width:65.5px;height:31px;border-radius:3.2px;background:#e0388f"></div>

<!-- action plan -->
<div class="b card" style="left:525px;top:1232px;width:1277px;height:90px"></div>
<svg class="a" style="left:1736px;top:1262px" width="28" height="20" viewBox="1736 1262 28 20" fill="none" stroke="#1565d8" stroke-width="2"><path d="M1739.8 1277.4L1749.3 1267.6L1758.8 1277.4"/></svg>

<!-- review panel -->
<div class="b card" style="left:1839px;top:624px;width:729px;height:414px"></div>
<div class="b card" style="left:1839px;top:1057px;width:729px;height:300px"></div>
<svg class="a" style="left:2502px;top:652px" width="28" height="20" viewBox="2502 652 28 20" fill="none" stroke="#1565d8" stroke-width="2"><path d="M2506.3 668.2L2515.8 658.2L2525.3 668.2"/></svg>
<svg class="a" style="left:2502px;top:1085px" width="28" height="20" viewBox="2502 1085 28 20" fill="none" stroke="#1565d8" stroke-width="2"><path d="M2506.4 1101.2L2515.7 1091.2L2525 1101.2"/></svg>
<svg class="a" style="left:2062.7px;top:701.3px" width="25" height="28.3" viewBox="325 290 640 725"><path d="M460.0 600.0C485.8 575.0 560.0 530.0 600.0 500.0C640.0 470.0 669.2 450.8 700.0 420.0C730.8 389.2 765.8 335.8 785.0 315.0C804.2 294.2 802.8 290.8 815.0 295.0C827.2 299.2 852.2 315.8 858.0 340.0C863.8 364.2 859.7 405.8 850.0 440.0C840.3 474.2 791.7 525.0 800.0 545.0C808.3 565.0 875.0 550.8 900.0 560.0C925.0 569.2 943.3 576.7 950.0 600.0C956.7 623.3 951.7 653.3 940.0 700.0C928.3 746.7 899.2 830.0 880.0 880.0C860.8 930.0 840.0 978.3 825.0 1000.0C810.0 1021.7 827.5 1013.3 790.0 1010.0C752.5 1006.7 655.0 995.0 600.0 980.0C545.0 965.0 485.8 941.7 460.0 920.0C434.2 898.3 447.5 895.0 445.0 850.0C442.5 805.0 442.5 691.7 445.0 650.0C447.5 608.3 434.2 625.0 460.0 600.0Z" fill="#2fb866"/><path d="M385 590Q330 750 385 910" fill="none" stroke="#2fb866" stroke-width="30"/></svg>
<svg class="a" style="left:2108.3px;top:701.5px" width="24.8" height="27.8" viewBox="1495 295 635 710"><path d="M1625.0 400.0C1639.2 381.7 1662.5 355.0 1700.0 340.0C1737.5 325.0 1801.7 316.7 1850.0 310.0C1898.3 303.3 1956.7 285.0 1990.0 300.0C2023.3 315.0 2031.7 353.3 2050.0 400.0C2068.3 446.7 2088.3 531.7 2100.0 580.0C2111.7 628.3 2126.7 665.0 2120.0 690.0C2113.3 715.0 2088.3 720.0 2060.0 730.0C2031.7 740.0 1958.3 730.0 1950.0 750.0C1941.7 770.0 1996.7 818.3 2010.0 850.0C2023.3 881.7 2034.2 915.8 2030.0 940.0C2025.8 964.2 2001.7 993.3 1985.0 995.0C1968.3 996.7 1955.8 975.8 1930.0 950.0C1904.2 924.2 1868.3 871.7 1830.0 840.0C1791.7 808.3 1735.0 785.0 1700.0 760.0C1665.0 735.0 1634.2 741.7 1620.0 690.0C1605.8 638.3 1614.2 498.3 1615.0 450.0C1615.8 401.7 1610.8 418.3 1625.0 400.0Z" fill="#b9c0cb"/><path d="M1548 395Q1495 550 1552 710" fill="none" stroke="#b9c0cb" stroke-width="30"/></svg>
<div class="tag" style="left:2059.7px;top:749.1px;width:196.5px;height:30.7px;background:#4880ea"></div><svg class="a" style="left:2232.0px;top:758.5px" width="12" height="12" viewBox="0 0 12 12"><path d="M0.8 0.8L11.2 11.2M11.2 0.8L0.8 11.2" stroke="#fff" stroke-width="1.35" fill="none"/></svg>
<div class="tag" style="left:2264.4px;top:749.1px;width:238.5px;height:30.7px;background:#f5b3aa"></div><svg class="a" style="left:2478.7px;top:758.5px" width="12" height="12" viewBox="0 0 12 12"><path d="M0.8 0.8L11.2 11.2M11.2 0.8L0.8 11.2" stroke="#8b1b0d" stroke-width="1.35" fill="none"/></svg>
<div class="tag" style="left:2059.7px;top:786.5px;width:243.4px;height:30.1px;background:#b0f0d3"></div><svg class="a" style="left:2278.9px;top:795.5px" width="12" height="12" viewBox="0 0 12 12"><path d="M0.8 0.8L11.2 11.2M11.2 0.8L0.8 11.2" stroke="#0f5030" stroke-width="1.35" fill="none"/></svg>
<div class="tag" style="left:2311.3px;top:786.5px;width:112.2px;height:30.1px;background:#3bd896"></div><svg class="a" style="left:2399.3px;top:795.5px" width="12" height="12" viewBox="0 0 12 12"><path d="M0.8 0.8L11.2 11.2M11.2 0.8L0.8 11.2" stroke="#0a4629" stroke-width="1.35" fill="none"/></svg>
<div class="tag" style="left:2059.7px;top:824.3px;width:176.4px;height:30.3px;background:#4880ea"></div><svg class="a" style="left:2211.9px;top:833.5px" width="12" height="12" viewBox="0 0 12 12"><path d="M0.8 0.8L11.2 11.2M11.2 0.8L0.8 11.2" stroke="#fff" stroke-width="1.35" fill="none"/></svg>
<div class="tag" style="left:2244.3px;top:824.3px;width:177.2px;height:30.3px;background:#3bd896"></div><svg class="a" style="left:2397.3px;top:833.5px" width="12" height="12" viewBox="0 0 12 12"><path d="M0.8 0.8L11.2 11.2M11.2 0.8L0.8 11.2" stroke="#0a4629" stroke-width="1.35" fill="none"/></svg>
<div class="tag" style="left:2059.7px;top:861px;width:175.5px;height:30.1px;background:#b8cff8"></div><svg class="a" style="left:2211.0px;top:870.0px" width="12" height="12" viewBox="0 0 12 12"><path d="M0.8 0.8L11.2 11.2M11.2 0.8L0.8 11.2" stroke="#0c2e6c" stroke-width="1.35" fill="none"/></svg>
<svg class="a" style="left:2436px;top:790px" width="24" height="24" viewBox="2436 790 24 24" fill="none" stroke="#3f4756" stroke-width="1.7"><path d="M2439 802H2456M2447.5 793.5V810.5"/></svg>
<svg class="a" style="left:2064px;top:922px" width="24" height="24" viewBox="2064 922 24 24" fill="none" stroke="#3f4756" stroke-width="1.7"><path d="M2068.4 934.3H2085M2076.7 926V942.6"/></svg>
<svg class="a" style="left:2064px;top:977px" width="24" height="24" viewBox="2064 977 24 24" fill="none" stroke="#3f4756" stroke-width="1.7"><path d="M2068 989.3H2084.6M2076.3 981V997.6"/></svg>
<svg class="a" style="left:1878px;top:1080px" width="26" height="24" viewBox="1878 1080 26 24" fill="#5b33f0"><path d="M1884.6 1083.1Q1885.2 1086.5 1888.6 1087.1Q1885.2 1087.7 1884.6 1091.1Q1884 1087.7 1880.6 1087.1Q1884 1086.5 1884.6 1083.1Z"/><path d="M1895.9 1088.4Q1896.8 1093.3 1901.7 1094.2Q1896.8 1095.1 1895.9 1100Q1895 1095.1 1890.1 1094.2Q1895 1093.3 1895.9 1088.4Z"/></svg>

<!-- bottom shadow -->
<div class="b" style="left:488px;top:1190px;width:2116px;height:111px;overflow:hidden"><div class="b" style="left:54px;top:128px;width:1415px;height:80px;box-shadow:0 0 70px 14px rgba(0,0,0,.225)"></div></div>
<div class="b" id="txt" style="left:0;top:0;width:2621px;height:1301px;will-change:transform">
<span class="t" id="t0" style="top:12.0px;font-size:33.8px;color:#1f242b;font-weight:700;-webkit-text-stroke:0.35px #fff;left:140.0px;transform:scaleX(0.9827);transform-origin:0 50%;">Reports</span>
<span class="t" id="t1" style="top:126.0px;font-size:24.5px;color:#1f242b;font-weight:700;-webkit-text-stroke:0.26px #fff;left:140.0px;transform:scaleX(0.8756);transform-origin:0 50%;">Leads</span>
<span class="t" id="t2" style="top:197.0px;font-size:20.6px;color:#3f4756;font-weight:700;-webkit-text-stroke:0.22px #fff;left:153.8px;transform:scaleX(0.9801);transform-origin:0 50%;">Lead attribution</span>
<span class="t" id="t3" style="top:252.0px;font-size:20.6px;color:#3f4756;font-weight:700;-webkit-text-stroke:0.22px #fff;left:153.8px;transform:scaleX(0.9155);transform-origin:0 50%;">Leads</span>
<span class="t" id="t4" style="top:319.0px;font-size:24.5px;color:#1f242b;font-weight:700;-webkit-text-stroke:0.26px #fff;left:140.0px;transform:scaleX(0.8794);transform-origin:0 50%;">Calls</span>
<span class="t" id="t5" style="top:390.0px;font-size:20.6px;color:#3f4756;font-weight:700;-webkit-text-stroke:0.22px #fff;left:153.8px;transform:scaleX(0.9412);transform-origin:0 50%;">Call log</span>
<span class="t" id="t6" style="top:438.0px;font-size:20.6px;color:#3f4756;font-weight:700;-webkit-text-stroke:0.22px #f8f9fb;left:178.9px;transform:scaleX(0.9775);transform-origin:0 50%;">Timeline</span>
<span class="t" id="t7" style="top:494.0px;font-size:20.6px;color:#3f4756;font-weight:700;-webkit-text-stroke:0.22px #fff;left:153.8px;transform:scaleX(0.9487);transform-origin:0 50%;">Calls by number</span>
<span class="t" id="t8" style="top:549.0px;font-size:20.6px;color:#3f4756;font-weight:700;-webkit-text-stroke:0.22px #fff;left:153.8px;transform:scaleX(0.9541);transform-origin:0 50%;">Unanswered calls</span>
<span class="t" id="t9" style="top:605.0px;font-size:20.6px;color:#3f4756;font-weight:700;-webkit-text-stroke:0.22px #fff;left:153.8px;transform:scaleX(0.9489);transform-origin:0 50%;">Key terms spotted</span>
<span class="t" id="t10" style="top:660.0px;font-size:20.6px;color:#3f4756;font-weight:700;-webkit-text-stroke:0.22px #fff;left:153.8px;transform:scaleX(0.9480);transform-origin:0 50%;">Call highlights</span>
<span class="t" id="t11" style="top:727.0px;font-size:24.5px;color:#1f242b;font-weight:700;-webkit-text-stroke:0.26px #fff;left:140.0px;transform:scaleX(0.8764);transform-origin:0 50%;">Texts</span>
<span class="t" id="t12" style="top:797.0px;font-size:20.6px;color:#3f4756;font-weight:700;-webkit-text-stroke:0.22px #fff;left:153.8px;transform:scaleX(0.9429);transform-origin:0 50%;">Text log</span>
<span class="t" id="t13" style="top:1208.0px;font-size:23.6px;color:#1565d8;-webkit-text-stroke:0.22px;left:258.0px;transform:scaleX(1.0139);transform-origin:0 50%;">New report</span>
<span class="t" id="t14" style="top:37.0px;font-size:22.8px;color:#fff;font-weight:700;-webkit-text-stroke:0.24px #1467d7;left:48.0px;margin-left:0.00px;transform:translateX(-50%) scaleX(0.8744);">AB</span>
<span class="t" id="t15" style="top:41.0px;font-size:42px;color:#1f242b;font-weight:700;-webkit-text-stroke:0.44px #f7f9fb;left:488.7px;transform:scaleX(1.0046);transform-origin:0 50%;">Timeline</span>
<span class="t" id="t16" style="top:42.0px;font-size:40.2px;color:#2e3238;left:726.3px;transform:scaleX(0.8829);transform-origin:0 50%;font-family:'DejaVu Sans Light','DejaVu Sans',sans-serif;">Rajesh Patel</span>
<span class="t" id="t17" style="top:49.0px;font-size:24px;color:#1565d8;-webkit-text-stroke:0.22px;left:2391.0px;transform:scaleX(0.9363);transform-origin:0 50%;">Anonymize Person</span>
<span class="t" id="t18" style="top:171.0px;font-size:25.2px;color:#1f242b;font-weight:700;-webkit-text-stroke:0.26px #fff;left:525.8px;transform:scaleX(0.9526);transform-origin:0 50%;">Rajesh Patel</span>
<span class="t" id="t19" style="top:224.0px;font-size:22.5px;color:#4b5563;-webkit-text-stroke:0.22px;left:525.8px;transform:scaleX(0.9684);transform-origin:0 50%;">986-216-4868</span>
<span class="t" id="t20" style="top:261.0px;font-size:22.5px;color:#4b5563;-webkit-text-stroke:0.22px;left:525.8px;transform:scaleX(0.9745);transform-origin:0 50%;">Nampa, ID</span>
<span class="t" id="t21" style="top:170.0px;font-size:22.5px;color:#525f78;-webkit-text-stroke:0.22px;left:881.5px;margin-left:0.00px;transform:translateX(-50%) scaleX(1.0424);">Total interactions</span>
<span class="t" id="t22" style="top:218.0px;font-size:68.5px;color:#25292f;font-weight:700;-webkit-text-stroke:0.22px;left:882.0px;margin-left:0.00px;transform:translateX(-50%) scaleX(0.8790);">1</span>
<span class="t" id="t23" style="top:307.0px;font-size:22.5px;color:#1f242b;-webkit-text-stroke:0.22px;left:880.4px;margin-left:0.00px;transform:translateX(-50%) scaleX(0.9928);">for Where the H…</span>
<span class="t" id="t24" style="top:398.0px;font-size:23px;color:#1565d8;-webkit-text-stroke:0.22px;left:568.6px;transform:scaleX(0.9590);transform-origin:0 50%;">Call</span>
<span class="t" id="t25" style="top:398.0px;font-size:23px;color:#1565d8;-webkit-text-stroke:0.22px;left:735.0px;transform:scaleX(0.9719);transform-origin:0 50%;">Text</span>
<span class="t" id="t26" style="top:398.0px;font-size:23px;color:#d92d20;-webkit-text-stroke:0.22px;left:916.9px;transform:scaleX(0.9867);transform-origin:0 50%;">Block</span>
<span class="t" id="t27" style="top:174.0px;font-size:25.5px;color:#1f242b;-webkit-text-stroke:0.22px;left:1073.5px;transform:scaleX(1.0111);transform-origin:0 50%;">Lead journey overview</span>
<span class="t" id="t28" style="top:254.0px;font-size:23.5px;color:#525f78;-webkit-text-stroke:0.22px;left:1073.5px;transform:scaleX(0.9763);transform-origin:0 50%;">First touch</span>
<span class="t" id="t29" style="top:291.0px;font-size:23.5px;color:#1f242b;-webkit-text-stroke:0.22px;left:1073.5px;transform:scaleX(0.9028);transform-origin:0 50%;">HGTV Magazine Ad</span>
<span class="t" id="t30" style="top:328.0px;font-size:23.5px;color:#1f242b;-webkit-text-stroke:0.22px;left:1073.5px;transform:scaleX(0.9423);transform-origin:0 50%;">Activity on Sep 3, 2025</span>
<span class="t" id="t31" style="top:254.0px;font-size:23.5px;color:#525f78;-webkit-text-stroke:0.22px;left:1729.9px;transform:scaleX(0.9626);transform-origin:0 50%;">Lead creation</span>
<span class="t" id="t32" style="top:291.0px;font-size:23.5px;color:#1f242b;-webkit-text-stroke:0.22px;left:1729.9px;transform:scaleX(0.9028);transform-origin:0 50%;">HGTV Magazine Ad</span>
<span class="t" id="t33" style="top:328.0px;font-size:23.5px;color:#1f242b;-webkit-text-stroke:0.22px;left:1729.9px;transform:scaleX(0.9290);transform-origin:0 50%;">(512-598-8991)</span>
<span class="t" id="t34" style="top:365.0px;font-size:23.5px;color:#1f242b;-webkit-text-stroke:0.22px;left:1729.9px;transform:scaleX(0.9423);transform-origin:0 50%;">Activity on Sep 3, 2025</span>
<span class="t" id="t35" style="top:254.0px;font-size:23.5px;color:#525f78;-webkit-text-stroke:0.22px;left:2386.0px;transform:scaleX(0.9939);transform-origin:0 50%;">Lead qualification</span>
<span class="t" id="t36" style="top:328.0px;font-size:23.5px;color:#1f242b;-webkit-text-stroke:0.22px;left:2386.0px;transform:scaleX(0.9228);transform-origin:0 50%;">Call on Sep 3</span>
<span class="t" id="t37" style="top:536.0px;font-size:25.5px;color:#1f242b;font-weight:700;-webkit-text-stroke:0.27px #fff;left:568.7px;transform:scaleX(0.9659);transform-origin:0 50%;">Inbound recorded call</span>
<span class="t" id="t38" style="top:537.0px;font-size:20.5px;color:#1f242b;-webkit-text-stroke:0.22px;left:858.4px;transform:scaleX(0.9196);transform-origin:0 50%;">HGTV Magazine Ad (512-598-8991)</span>
<span class="t" id="t39" style="top:537.0px;font-size:20.5px;color:#1f242b;-webkit-text-stroke:0.22px;left:1211.8px;transform:scaleX(0.9066);transform-origin:0 50%;">Sep 3  8:55 AM</span>
<span class="t" id="t40" style="top:897.0px;font-size:22.5px;color:#14469a;-webkit-text-stroke:0.22px;left:584.8px;transform:scaleX(0.9376);transform-origin:0 50%;">Agent:</span>
<span class="t" id="t41" style="top:898.0px;font-size:20.6px;color:#14469a;font-weight:700;-webkit-text-stroke:0.22px #fff;left:715.0px;transform:scaleX(0.9903);transform-origin:0 50%;">70 %</span>
<span class="t" id="t42" style="top:959.0px;font-size:22.5px;color:#6aa9f2;-webkit-text-stroke:0.22px;left:584.8px;transform:scaleX(0.9491);transform-origin:0 50%;">Customer:</span>
<span class="t" id="t43" style="top:960.0px;font-size:20.6px;color:#6aa9f2;font-weight:700;-webkit-text-stroke:0.22px #fff;left:715.0px;transform:scaleX(0.9903);transform-origin:0 50%;">30 %</span>
<span class="t" id="t44" style="top:910.0px;font-size:19px;color:#6aa9f2;-webkit-text-stroke:0.22px;left:1227.4px;margin-left:0.00px;transform:translateX(-50%) scaleX(0.8467);">1x</span>
<span class="t" id="t45" style="top:889.0px;font-size:22.5px;color:#6aa9f2;-webkit-text-stroke:0.22px;right:856.5px;transform:scaleX(0.9589);transform-origin:100% 50%;">01:49</span>
<span class="t" id="t46" style="top:936.0px;font-size:24px;color:#1565d8;-webkit-text-stroke:0.22px;right:856.5px;transform:scaleX(0.9278);transform-origin:100% 50%;">Download MP3</span>
<span class="t" id="t47" style="top:1091.0px;font-size:23.4px;color:#111;-webkit-text-stroke:0.22px;left:525.2px;transform:scaleX(0.9612);transform-origin:0 50%;">Convert Assist</span>
<span class="t" id="t48" style="top:1091.0px;font-size:23.4px;color:#222;-webkit-text-stroke:0.22px;left:748.0px;transform:scaleX(0.9910);transform-origin:0 50%;">Transcript</span>
<span class="t" id="t49" style="top:1093.0px;font-size:20.5px;color:#fff;-webkit-text-stroke:0.22px;left:986.6px;margin-left:0.00px;transform:translateX(-50%) scaleX(0.9726);">Alpha</span>
<span class="t" id="t50" style="top:1179.0px;font-size:24px;color:#1565d8;-webkit-text-stroke:0.22px;right:820.0px;transform:scaleX(0.9534);transform-origin:100% 50%;">All insights to date</span>
<span class="t" id="t51" style="top:1259.0px;font-size:23.8px;color:#1f242b;font-weight:700;-webkit-text-stroke:0.25px #f4f4f4;left:562.9px;transform:scaleX(0.9077);transform-origin:0 50%;">Action plan</span>
<span class="t" id="t52" style="top:1294.0px;font-size:22.1px;color:#1f242b;-webkit-text-stroke:0.22px;left:563.5px;transform:scaleX(0.9565);transform-origin:0 50%;">1. Confirm the appointment time and date with the customer.</span>
<span class="t" id="t53" style="top:650.0px;font-size:24px;color:#1f242b;-webkit-text-stroke:0.22px;left:1876.6px;transform:scaleX(0.9396);transform-origin:0 50%;">Review this call</span>
<span class="t" id="t54" style="top:703.0px;font-size:21px;color:#3f4756;-webkit-text-stroke:0.22px;left:1876.6px;transform:scaleX(0.9705);transform-origin:0 50%;">Lead qualification:</span>
<span class="t" id="t55" style="top:750.0px;font-size:21px;color:#3f4756;-webkit-text-stroke:0.22px;left:1876.6px;transform:scaleX(0.8964);transform-origin:0 50%;">Tags:</span>
<span class="t" id="t56" style="top:913.0px;font-size:21px;color:#3f4756;-webkit-text-stroke:0.22px;left:1876.3px;transform:scaleX(0.9224);transform-origin:0 50%;">Value:</span>
<span class="t" id="t57" style="top:974.0px;font-size:21px;color:#3f4756;-webkit-text-stroke:0.22px;left:1876.3px;transform:scaleX(0.9225);transform-origin:0 50%;">Notes:</span>
<span class="t" id="t58" style="top:1083.0px;font-size:24px;color:#1f242b;-webkit-text-stroke:0.22px;left:1912.2px;transform:scaleX(0.9384);transform-origin:0 50%;">Generated Insights</span>
<span class="t" id="t59" style="top:1141.0px;font-size:21px;color:#1f242b;-webkit-text-stroke:0.22px;left:1876.3px;transform:scaleX(0.9604);transform-origin:0 50%;">Summary:</span>
<span class="t" id="t60" style="top:1191.0px;font-size:21px;color:#1f242b;-webkit-text-stroke:0.22px;left:1876.3px;transform:scaleX(0.9564);transform-origin:0 50%;">The customer had previously called to request a quote for a bathroom</span>
<span class="t" id="t61" style="top:1222.0px;font-size:21px;color:#1f242b;-webkit-text-stroke:0.22px;left:1876.3px;transform:scaleX(0.9563);transform-origin:0 50%;">renovation. The agent reviewed the project details and scheduled an on-</span>
<span class="t" id="t62" style="top:1254.0px;font-size:21px;color:#1f242b;-webkit-text-stroke:0.22px;left:1876.3px;transform:scaleX(0.9629);transform-origin:0 50%;">site consultation for the following afternoon at 2:30 pm to discuss the</span>
<span class="t" id="t63" style="top:1285.0px;font-size:21px;color:#1f242b;-webkit-text-stroke:0.22px;left:1876.3px;transform:scaleX(0.9518);transform-origin:0 50%;">customer's preferences and needs in order to provide a complete</span>
<span class="t" id="t64" style="top:755.0px;font-size:20.8px;color:#fff;font-weight:700;-webkit-text-stroke:0.22px #4880ea;left:2067.9px;transform:scaleX(0.9302);transform-origin:0 50%;">hvac replacment</span>
<span class="t" id="t65" style="top:755.0px;font-size:20.8px;color:#8b1b0d;font-weight:700;-webkit-text-stroke:0.22px #f5b3aa;left:2271.7px;transform:scaleX(0.9012);transform-origin:0 50%;">Customer Conversion</span>
<span class="t" id="t66" style="top:792.0px;font-size:20.8px;color:#0f5030;font-weight:700;-webkit-text-stroke:0.22px #b0f0d3;left:2067.9px;transform:scaleX(0.9266);transform-origin:0 50%;">Appointment Request</span>
<span class="t" id="t67" style="top:792.0px;font-size:20.8px;color:#0a4629;font-weight:700;-webkit-text-stroke:0.22px #3bd896;left:2319.5px;transform:scaleX(0.8929);transform-origin:0 50%;">Booked</span>
<span class="t" id="t68" style="top:830.0px;font-size:20.8px;color:#fff;font-weight:700;-webkit-text-stroke:0.22px #4880ea;left:2068.2px;transform:scaleX(0.9155);transform-origin:0 50%;">New Customer</span>
<span class="t" id="t69" style="top:830.0px;font-size:20.8px;color:#0a4629;font-weight:700;-webkit-text-stroke:0.22px #3bd896;left:2252.6px;transform:scaleX(0.9040);transform-origin:0 50%;">Quote Request</span>
<span class="t" id="t70" style="top:867.0px;font-size:20.8px;color:#0c2e6c;font-weight:700;-webkit-text-stroke:0.22px #b8cff8;left:2068.2px;transform:scaleX(0.9135);transform-origin:0 50%;">Qualified Lead</span>
</div>

<!-- chat bubble -->
<div class="b" style="left:2534px;top:1246.8px;width:76.4px;height:76.4px;border-radius:50%;background:#ff6127"></div>
<div class="b" style="left:2555.1px;top:1264.6px;width:33.6px;height:34.6px;border-radius:4px 4px 0 4px;background:#fff"></div>
<svg class="a" style="left:2556px;top:1284px" width="32" height="14" viewBox="2556 1284 32 14" fill="none" stroke="#ff6127" stroke-width="2" stroke-linecap="round"><path d="M2560.4 1288.9Q2571.8 1298 2583.2 1289.1"/></svg>
</body></html>
